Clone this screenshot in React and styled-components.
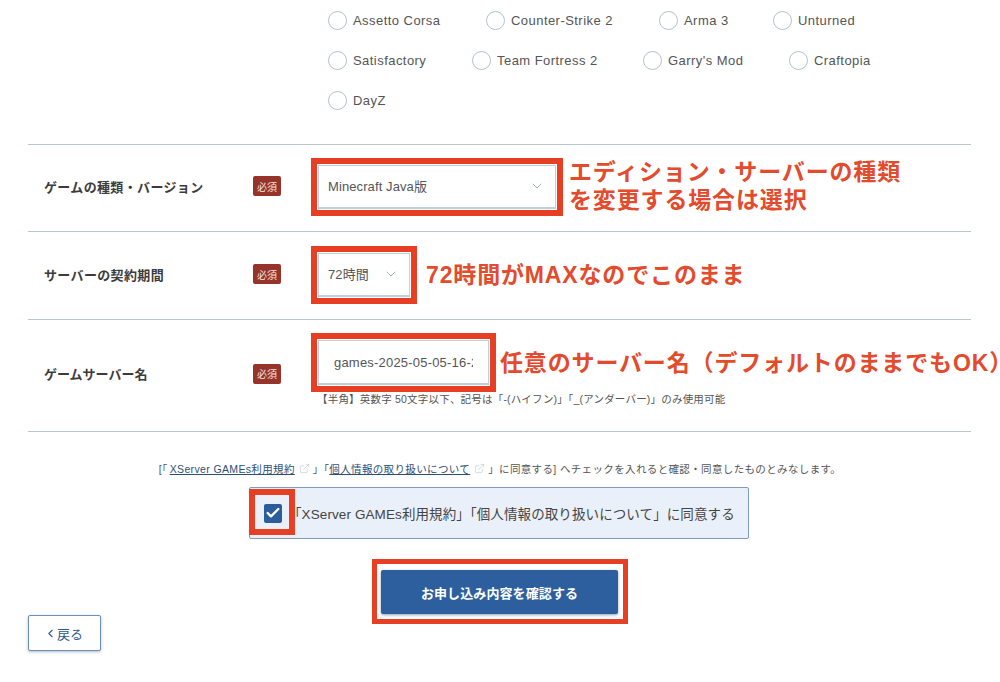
import React from "react";
import styled, { createGlobalStyle } from "styled-components";
import { ChevronDown, ChevronLeft, Check, ExternalLink } from "lucide-react";

const Global = createGlobalStyle`
  html, body { margin: 0; padding: 0; background: #fff; }
  body { font-family: "Liberation Sans", "Noto Sans CJK JP", sans-serif; color: #444; }
  * { box-sizing: border-box; }
`;

const Page = styled.div`
  width: 1000px;
  height: 682px;
  overflow: hidden;
`;

const RadioGroup = styled.div`
  padding: 0 0 24px 328px;
  display: flex;
  flex-direction: column;
`;

const RadioRow = styled.div`
  display: flex;
  height: 40px;
  align-items: center;
`;

const RadioItem = styled.label`
  display: flex;
  align-items: center;
  gap: 6px;
  width: ${(p) => p.$w}px;
  font-size: 13px;
  letter-spacing: 0.45px;
  color: #555;
  white-space: nowrap;
`;

const RadioCircle = styled.span`
  width: 19px;
  height: 19px;
  flex: none;
  border-radius: 50%;
  border: 1.5px solid #b4c0cc;
  background: #fff;
`;

const Rows = styled.div`
  margin: 0 29px 0 28px;
  border-top: 1px solid #b9c9cf;
`;

const FormRow = styled.div`
  display: grid;
  grid-template-columns: 209px 58px 1fr;
  height: ${(p) => p.$h}px;
  padding: 0 0 ${(p) => p.$bottom || 0}px 16px;
  border-bottom: 1px solid #b9c9cf;
  align-items: center;
`;

const Label = styled.div`
  margin-bottom: 2px;
  font-size: 13px;
  font-weight: 700;
  letter-spacing: ${(p) => p.$ls ?? 0.35}px;
  color: #3c3c3c;
  white-space: nowrap;
`;

const Badge = styled.span`
  width: 28px;
  height: 20px;
  margin-bottom: 2px;
  background: #96332b;
  color: #f3e4e2;
  border-radius: 2px;
  font-size: 10px;
  display: flex;
  align-items: center;
  justify-content: center;
`;

const Field = styled.div`
  display: flex;
  align-items: center;
  white-space: nowrap;
`;

const FieldStack = styled.div`
  align-self: start;
  padding-top: ${(p) => p.$top}px;
`;

const RedFrame = styled.div`
  border: 6px solid #e63f23;
  padding: 1px;
  flex: none;
  background: #fff;
`;

const Select = styled.div`
  display: flex;
  align-items: center;
  justify-content: space-between;
  width: ${(p) => p.$w}px;
  height: ${(p) => p.$h}px;
  padding: 0 10px 2px 9px;
  border: 1px solid #c0d0de;
  border-bottom-width: 2px;
  font-size: 13px;
  letter-spacing: 0.1px;
  color: #555;
  background: #fff;
  svg { color: #8fa3b5; }
`;

const NameInput = styled.input`
  display: block;
  width: 171px;
  height: 45px;
  padding: 0 15px;
  border: 1px solid #c4ced8;
  border-bottom-width: 2px;
  outline: none;
  font: 13px "Liberation Sans", "Noto Sans CJK JP", sans-serif;
  letter-spacing: 0.2px;
  color: #555;
  background: #fff;
`;

const Note = styled.span`
  font-family: "Liberation Sans", "Noto Sans CJK JP", sans-serif;
  font-weight: 700;
  font-size: 23px;
  line-height: 28px;
  letter-spacing: 0.85px;
  color: #e44a2c;
  margin-left: ${(p) => p.$gap}px;
  white-space: pre;
  position: relative;
  top: ${(p) => p.$top || 0}px;
`;

const HalfWidth = styled.span`
  font-feature-settings: "halt";
  letter-spacing: 0;
`;

const Help = styled.div`
  font-size: 10.5px;
  letter-spacing: 0.2px;
  color: #555;
  padding: 0 0 0 6px;
  line-height: 14px;
  white-space: nowrap;
`;

const Terms = styled.p`
  margin: 29px 0 0;
  text-align: center;
  font-size: 10.5px;
  letter-spacing: 0.36px;
  line-height: 16px;
  color: #555;
  white-space: nowrap;
`;

const TermLink = styled.a`
  color: #2c4f78;
  text-decoration: underline;
  margin-left: ${(p) => p.$indent || 0}px;
`;

const ExtIcon = styled(ExternalLink)`
  color: #a9b2bb;
  vertical-align: -1px;
  margin: 0 3px 0 4px;
`;

const AgreeBox = styled.div`
  position: relative;
  width: 500px;
  height: 52px;
  margin: 10px 0 0 249px;
  display: flex;
  align-items: center;
  gap: 6px;
  padding-left: 14px;
  background: #e9f0f9;
  border: 1px solid #7f9cbd;
  border-radius: 2px;
  font-size: 13.5px;
  letter-spacing: 0.1px;
  color: #444;
  white-space: nowrap;
`;

const CheckBox = styled.span`
  width: 18px;
  height: 19px;
  flex: none;
  border-radius: 2px;
  background: #2b5c9c;
  color: #fff;
  display: flex;
  align-items: center;
  justify-content: center;
`;

const CheckHighlight = styled.span`
  position: absolute;
  left: -1px;
  top: 1px;
  width: 46px;
  height: 46px;
  border: 6px solid #e63f23;
`;

const Footer = styled.div`
  display: grid;
  grid-template-columns: 1fr auto 1fr;
  margin-top: 20px;
  padding-left: 28px;
`;

const BackButton = styled.button`
  justify-self: start;
  width: 73px;
  height: 36px;
  margin-top: 56px;
  display: flex;
  align-items: center;
  justify-content: center;
  gap: 0;
  padding: 0 2px 0 0;
  background: #fff;
  border: 1px solid #6f8fb3;
  border-radius: 2px;
  box-shadow: 0 1px 3px rgba(70, 100, 140, 0.45);
  font: 13px "Noto Sans CJK JP", sans-serif;
  color: #2f5a8c;
`;

const ButtonFrame = styled.div`
  width: 256px;
  height: 65px;
  padding: 6px 5px 5px 4px;
  border: 5px solid #e63f23;
  margin-right: 28px;
`;

const PrimaryButton = styled.button`
  display: block;
  width: 100%;
  height: 100%;
  border: 0;
  border-radius: 2px;
  background: #2d5f9e;
  box-shadow: 0 1px 3px rgba(40, 70, 110, 0.5);
  color: #fff;
  font: 700 13px "Noto Sans CJK JP", sans-serif;
  letter-spacing: 0.1px;
`;

const games = [
  [["Assetto Corsa", 158], ["Counter-Strike 2", 173], ["Arma 3", 114], ["Unturned", 120]],
  [["Satisfactory", 144], ["Team Fortress 2", 171], ["Garry's Mod", 146], ["Craftopia", 120]],
  [["DayZ", 120]],
];

export default function App() {
  return (
    <Page>
      <Global />
      <RadioGroup>
        {games.map((row, i) => (
          <RadioRow key={i}>
            {row.map(([name, w]) => (
              <RadioItem key={name} $w={w}>
                <RadioCircle />
                {name}
              </RadioItem>
            ))}
          </RadioRow>
        ))}
      </RadioGroup>

      <Rows>
        <FormRow $h={87} $bottom={2}>
          <Label>ゲームの種類・バージョン</Label>
          <Badge>必須</Badge>
          <Field>
            <RedFrame>
              <Select $w={238} $h={44}>
                Minecraft Java版
                <ChevronDown size={16} strokeWidth={1.25} />
              </Select>
            </RedFrame>
            <Note $gap={6} $top={-1}>{"エディション・サーバーの種類\nを変更する場合は選択"}</Note>
          </Field>
        </FormRow>
        <FormRow $h={88} $bottom={1}>
          <Label>サーバーの契約期間</Label>
          <Badge>必須</Badge>
          <Field>
            <RedFrame>
              <Select $w={92} $h={44}>
                72時間
                <ChevronDown size={16} strokeWidth={1.25} />
              </Select>
            </RedFrame>
            <Note $gap={9}>72時間がMAXなのでこのまま</Note>
          </Field>
        </FormRow>
        <FormRow $h={112} $bottom={2}>
          <Label $ls={0}>ゲームサーバー名</Label>
          <Badge>必須</Badge>
          <FieldStack $top={13}>
            <Field>
              <RedFrame>
                <NameInput readOnly value="games-2025-05-05-16-28-30" />
              </RedFrame>
              <Note $gap={4}>
                任意のサーバー名（デフォルトのままでもOK<HalfWidth>）</HalfWidth>
              </Note>
            </Field>
            <Help>【半角】英数字 50文字以下、記号は「-(ハイフン)」「_(アンダーバー)」のみ使用可能</Help>
          </FieldStack>
        </FormRow>
      </Rows>

      <Terms>
        [「<TermLink $indent={2}>XServer GAMEs利用規約</TermLink>
        <ExtIcon size={11} strokeWidth={1} />」「<TermLink>個人情報の取り扱いについて</TermLink>
        <ExtIcon size={11} strokeWidth={1} />」に同意する] へチェックを入れると確認・同意したものとみなします。
      </Terms>

      <AgreeBox>
        <CheckBox>
          <Check size={16} strokeWidth={3.5} />
        </CheckBox>
        「XServer GAMEs利用規約」「個人情報の取り扱いについて」に同意する
        <CheckHighlight />
      </AgreeBox>

      <Footer>
        <BackButton>
          <ChevronLeft size={13} strokeWidth={2} />
          戻る
        </BackButton>
        <ButtonFrame>
          <PrimaryButton>お申し込み内容を確認する</PrimaryButton>
        </ButtonFrame>
        <span />
      </Footer>
    </Page>
  );
}
